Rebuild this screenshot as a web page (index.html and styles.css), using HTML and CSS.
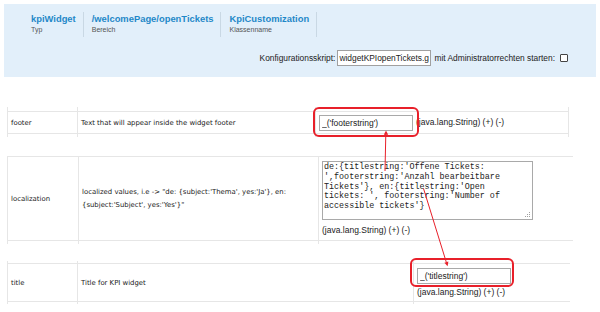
FILE: index.html
```html
<!DOCTYPE html>
<html>
<head>
<meta charset="utf-8">
<link rel="stylesheet" href="styles.css">
</head>
<body>
<div class="panel">
  <div class="items">
    <div class="item"><div class="ititle">kpiWidget</div><div class="isub">Typ</div></div>
    <div class="item"><div class="ititle">/welcomePage/openTickets</div><div class="isub">Bereich</div></div>
    <div class="item"><div class="ititle">KpiCustomization</div><div class="isub">Klassenname</div></div>
  </div>
  <div class="config">
    <span class="clabel">Konfigurationsskript:</span>
    <input class="cinput" type="text" value="widgetKPIopenTickets.groovy">
    <span class="clabel2">mit Administratorrechten starten:</span>
    <input class="cbox" type="checkbox">
  </div>
</div>

<div class="blk b1">
  <div class="cell c1"><div class="in">footer</div></div>
  <div class="cell c2"><div class="in">Text that will appear inside the widget footer</div></div>
  <div class="cell c3"><div class="in"><div class="val"><input class="vinput" type="text" value="_('footerstring')"><span class="jtype">(java.lang.String) (+) (-)</span></div></div></div>
</div>

<div class="blk b2">
  <div class="cell c1"><div class="in">localization</div></div>
  <div class="cell c2"><div class="in"><div class="desc">localized values, i.e -&gt; "de: {subject:'Thema', yes:'Ja'}, en: {subject:'Subject', yes:'Yes'}"</div></div></div>
  <div class="cell c3"><div class="in"><div class="val">
    <div class="ta"><textarea class="vtext" spellcheck="false">de:{titlestring:'Offene Tickets: ',footerstring:'Anzahl bearbeitbare Tickets'}, en:{titlestring:'Open tickets: ', footerstring:'Number of accessible tickets'}</textarea><svg class="grip" width="6" height="6" viewBox="0 0 6 6"><rect x="4" y="0" width="1" height="1"/><rect x="2" y="2" width="1" height="1"/><rect x="4" y="2" width="1" height="1"/><rect x="0" y="4" width="1" height="1"/><rect x="2" y="4" width="1" height="1"/><rect x="4" y="4" width="1" height="1"/></svg></div>
    <span class="jtype">(java.lang.String) (+) (-)</span>
  </div></div></div>
</div>

<div class="blk b3">
  <div class="cell c1"><div class="in">title</div></div>
  <div class="cell c2"><div class="in">Title for KPI widget</div></div>
  <div class="cell c3"><div class="in"><div class="val"><input class="vinput" type="text" value="_('titlestring')"><span class="jtype">(java.lang.String) (+) (-)</span></div></div></div>
</div>

<svg class="annot" width="600" height="312" viewBox="0 0 600 312">
  <rect x="314" y="108" width="104" height="28" rx="5" ry="5" fill="none" stroke="#e8202a" stroke-width="2"/>
  <rect x="411" y="259" width="102" height="27" rx="5" ry="5" fill="none" stroke="#e8202a" stroke-width="2"/>
  <line x1="385" y1="171" x2="385.8" y2="134" stroke="#e8202a" stroke-width="1"/>
  <polygon points="386,130.5 383.8,134.8 388.2,134.8" fill="#e8202a"/>
  <line x1="423.5" y1="188.5" x2="446.4" y2="262.5" stroke="#e8202a" stroke-width="1"/>
  <polygon points="447.6,266.2 448.4,261.6 444.4,262.8" fill="#e8202a"/>
</svg>
</body>
</html>
```

FILE: styles.css
```css
* { box-sizing: border-box; }
body {
  margin: 0;
  background: #fff;
  font-family: "Liberation Sans", Arial, sans-serif;
  color: #222;
  position: relative;
  width: 600px;
  height: 312px;
  overflow: hidden;
}
.panel {
  margin: 4px 4px 0 4px;
  height: 73px;
  background: #e2effa;
  padding: 8px 28px 0 27px;
}
.items { display: flex; }
.item {
  height: 25px;
  padding: 1px 7px 0 8px;
  border-right: 1px solid #c9d8e4;
}
.item:first-child { padding-left: 0; }
.ititle {
  font-weight: bold;
  font-size: 9.4px;
  line-height: 11px;
  color: #1f88c8;
  white-space: nowrap;
}
.isub {
  font-size: 7px;
  line-height: 9px;
  color: #555;
  margin-top: 1px;
}
.config {
  display: flex;
  justify-content: flex-end;
  align-items: center;
  margin-top: 13px;
  font-size: 8.4px;
  color: #222;
}
.cinput {
  width: 94px;
  height: 16px;
  margin: 0 3px 0 2px;
  padding: 0 1px;
  border: 1px solid #a0a0a0;
  font: 8.4px "Liberation Sans", Arial, sans-serif;
  color: #222;
  background: #fff;
  outline: none;
}
.cbox {
  appearance: none;
  -webkit-appearance: none;
  width: 8px;
  height: 8px;
  margin: 0 0 0 5px;
  border: 1px solid #444;
  border-radius: 1px;
  background: #fff;
}

.blk {
  display: flex;
  margin-left: 7px;
  font-family: "DejaVu Sans", Verdana, sans-serif;
  font-size: 6.9px;
  color: #222;
}
.cell { border-left: 1px solid #e6e6e6; }
.in {
  display: flex;
  align-items: center;
  border-top: 1px solid #e6e6e6;
  border-bottom: 1px solid #e6e6e6;
  padding-left: 3px;
}
.val {
  display: flex;
  flex-wrap: wrap;
  align-items: center;
  column-gap: 3px;
  font-family: "Liberation Sans", Arial, sans-serif;
  font-size: 8.5px;
  line-height: 11px;
  color: #222;
}
.vinput {
  width: 94px;
  height: 16px;
  margin: 0;
  padding: 0 2px;
  border: 1px solid #a9a9a9;
  font: 8.5px "Liberation Sans", Arial, sans-serif;
  color: #222;
  background: #fff;
  outline: none;
}
.desc { line-height: 13px; }

/* block 1 */
.b1 { margin-top: 30px; }
.b1 .cell { padding: 4px 0 3px; }
.b1 .in { height: 23px; }
.b1 .c1 { width: 70px; }
.b1 .c2 { width: 238px; }
.b1 .c3 { width: 254px; border-right: 1px solid #e6e6e6; }

/* block 2 */
.b2 { margin-top: 19px; }
.b2 .cell { padding: 0 0 3px; }
.b2 .in { height: 85px; }
.b2 .c1 { width: 71px; }
.b2 .c2 { width: 240px; }
.b2 .c3 { width: 255px; }
.b2 .val { row-gap: 5px; }

/* block 3 */
.b3 { margin-top: 17px; }
.b3 .cell { padding: 2px 0 2px; }
.b3 .in { height: 39px; }
.b3 .c1 { width: 70px; }
.b3 .c2 { width: 336px; }
.b3 .c3 { width: 157px; }
.b3 .val { row-gap: 3px; }

.ta {
  position: relative;
  width: 211px;
  height: 59px;
}
.vtext {
  display: block;
  width: 211px;
  height: 59px;
  margin: 0;
  padding: 1px 4px 1px 1px;
  border: 1px solid #a9a9a9;
  font-family: "Liberation Mono", "Courier New", monospace;
  font-size: 8.4px;
  line-height: 9.8px;
  color: #222;
  background: #fff;
  resize: none;
  overflow: hidden;
  outline: none;
}
.grip {
  position: absolute;
  right: 2px;
  bottom: 2px;
  fill: #a0a0a0;
}
.annot {
  position: absolute;
  left: 0;
  top: 0;
  pointer-events: none;
}
```
